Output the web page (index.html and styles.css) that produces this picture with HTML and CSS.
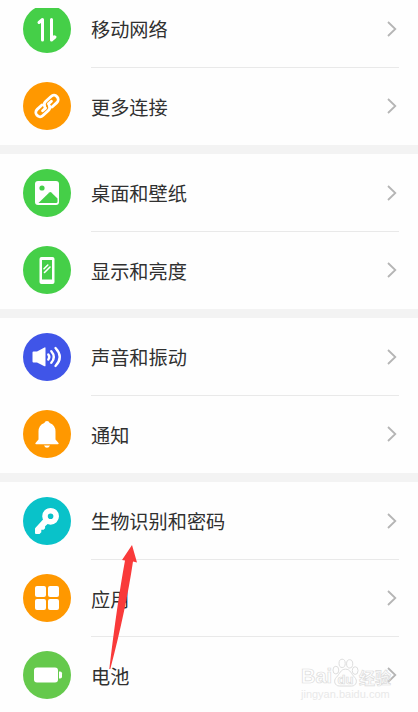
FILE: index.html
```html
<!DOCTYPE html>
<html lang="zh-CN">
<head>
  <meta charset="UTF-8">
  <meta name="viewport" content="width=device-width, initial-scale=1.0">
  <title>设置</title>
  <link rel="stylesheet" href="styles.css">
</head>
<body>

  <main class="settings">

    <!-- Network (scrolled partly under the top edge) -->
    <section class="group group-scrolled">
      <a class="row">
        <span class="icon green">
          <svg viewBox="0 0 48 48" fill="none" stroke="#fff" stroke-width="3" stroke-linecap="round" stroke-linejoin="round"><path d="M19.500 35V14.500l-3.500 3M28.500 14.500v20.500l3.500-3"/><path d="M28.500 34.500v-3.500h3z" fill="#fff" stroke-width="1"/></svg>
        </span>
        <span class="label">移动网络</span>
        <svg class="chevron" viewBox="0 0 10 16"><path d="M1 1l7.300 7L1 15"/></svg>
      </a>
      <a class="row">
        <span class="icon orange">
          <svg viewBox="0 0 48 48"><g transform="rotate(-43 24 24)" fill="none" stroke="#fff" stroke-width="2.900" stroke-linecap="round"><path d="M21 19.800H14.500a4.200 4.200 0 0 0 0 8.400H22a4.200 4.200 0 0 0 4-3M27 28.200h6.500a4.200 4.200 0 0 0 0-8.400H26a4.200 4.200 0 0 0-4 3M17.500 24.500h4M26.500 23.500h4"/></g></svg>
        </span>
        <span class="label">更多连接</span>
        <svg class="chevron" viewBox="0 0 10 16"><path d="M1 1l7.300 7L1 15"/></svg>
      </a>
    </section>

    <!-- Display -->
    <section class="group">
      <a class="row">
        <span class="icon green">
          <svg viewBox="0 0 48 48"><rect x="12" y="12" width="24" height="24" rx="3" fill="#fff"/><g fill="#45cf48"><circle cx="19" cy="19" r="2.600"/><path d="M15.500 34L26.300 23.500Q27.300 22.600 28.300 23.500L34.500 29.500V32.500Q34.500 34 33 34z"/></g></svg>
        </span>
        <span class="label">桌面和壁纸</span>
        <svg class="chevron" viewBox="0 0 10 16"><path d="M1 1l7.300 7L1 15"/></svg>
      </a>
      <a class="row">
        <span class="icon green">
          <svg viewBox="0 0 48 48"><rect x="16.500" y="11" width="15" height="27" rx="2" fill="#fff"/><path d="M19 14h10v19.500H19z" fill="#45cf48"/><path d="M21 22.800l3.800-3.800M21.500 26.500l5.500-5.500" stroke="#fff" stroke-width="1.600" stroke-linecap="round"/></svg>
        </span>
        <span class="label">显示和亮度</span>
        <svg class="chevron" viewBox="0 0 10 16"><path d="M1 1l7.300 7L1 15"/></svg>
      </a>
    </section>

    <!-- Sound and notifications -->
    <section class="group">
      <a class="row">
        <span class="icon blue">
          <svg viewBox="0 0 48 48"><path d="M9.500 19.500q0-1 1-1H14L21.500 14.500q1-.5 1 .7v17.300q0 1.200-1 .7L14 29.500h-3.500q-1 0-1-1z" fill="#fff"/><g fill="none" stroke="#fff" stroke-width="2.400" stroke-linecap="round"><path d="M25.300 21.500q2 2.500 0 5M28.300 18.200q5 5.800 0 11.600M32.500 15q8.500 9 0 18"/></g></svg>
        </span>
        <span class="label">声音和振动</span>
        <svg class="chevron" viewBox="0 0 10 16"><path d="M1 1l7.300 7L1 15"/></svg>
      </a>
      <a class="row">
        <span class="icon orange">
          <svg viewBox="0 0 48 48"><path d="M24 11q2 0 2.700 1.900Q32.500 15 32.500 21.500V29.500L35.500 33q.7 1.300-.8 1.300H13.300q-1.500 0-.8-1.300L15.500 29.500V21.500Q15.500 15 21.300 12.900 22 11 24 11zM21 35.500h6q-1 2.200-3 2.200t-3-2.200z" fill="#fff"/></svg>
        </span>
        <span class="label">通知</span>
        <svg class="chevron" viewBox="0 0 10 16"><path d="M1 1l7.300 7L1 15"/></svg>
      </a>
    </section>

    <!-- Security, apps, battery -->
    <section class="group">
      <a class="row">
        <span class="icon teal">
          <svg viewBox="0 0 48 48"><circle cx="27.600" cy="19.300" r="5.600" fill="none" stroke="#fff" stroke-width="5.600"/><path d="M20.500 22L12.500 30.800q-.5.500-.5 1.300V36q0 1 1 1h3.500l1.800-1.800v-2.400h2.300l1.500-1.500v-2l3.400-3z" fill="#fff"/></svg>
        </span>
        <span class="label">生物识别和密码</span>
        <svg class="chevron" viewBox="0 0 10 16"><path d="M1 1l7.300 7L1 15"/></svg>
      </a>
      <a class="row">
        <span class="icon orange">
          <svg viewBox="0 0 48 48" fill="#fff"><rect x="12" y="12" width="11" height="11" rx="2"/><rect x="25" y="12" width="11" height="11" rx="2"/><rect x="12" y="25" width="11" height="11" rx="2"/><rect x="25" y="25" width="11" height="11" rx="2"/></svg>
        </span>
        <span class="label">应用</span>
        <svg class="chevron" viewBox="0 0 10 16"><path d="M1 1l7.300 7L1 15"/></svg>
      </a>
      <a class="row">
        <span class="icon light-green">
          <svg viewBox="0 0 48 48" fill="#fff"><rect x="11" y="16.500" width="24" height="15" rx="3"/><path d="M36 20.500h1.200q1.800 0 1.800 1.800v3.400q0 1.800-1.800 1.800H36z"/></svg>
        </span>
        <span class="label">电池</span>
        <svg class="chevron" viewBox="0 0 10 16"><path d="M1 1l7.300 7L1 15"/></svg>
      </a>
    </section>

  </main>

  <!-- Arrow pointing at the biometrics row -->
  <svg class="pointer" viewBox="0 0 30 126"><path d="M23 1L28 18.500 24 17.500Q17 65 1.300 125H.3Q8 60 16 16.500L13 16z"/></svg>

  <!-- Watermark -->
  <div class="watermark">
    <div class="brand">
      <span class="brand-latin">Bai</span>
      <span class="paw">
        <svg viewBox="0 0 28 30"><path d="M14 11C9 11 8 16 4.500 19.500 1 23 3 28.500 7.500 28.500h13c4.500 0 6.500-5.500 3-9C20 16 19 11 14 11z"/><ellipse cx="4" cy="12" rx="3" ry="4"/><ellipse cx="10.500" cy="5" rx="3.200" ry="4.300"/><ellipse cx="18.300" cy="5.500" rx="3.200" ry="4.300"/><ellipse cx="24" cy="12.500" rx="3" ry="4"/></svg>
        <span class="paw-text">du</span>
      </span>
      <span class="brand-cn">经验</span>
    </div>
    <div class="site">jingyan.baidu.com</div>
  </div>

</body>
</html>
```
FILE: styles.css
```css
:root {
  --bg-color: #f3f3f3;
  --card-bg: #fefefe;
  --text-color: #303030;
  --line: #e9e9e9;
  --mark: #dcdcdc;
}

* {
  box-sizing: border-box;
}

body {
  position: relative;
  height: 712px;
  margin: 0;
  padding-top: 8px;
  overflow: hidden;
  background-color: var(--card-bg);
  color: var(--text-color);
  font-family: "Noto Sans CJK SC", sans-serif;
}

.settings {
  display: flex;
  flex-direction: column;
  gap: 9px;
  background-color: var(--bg-color);
}

.group {
  display: flex;
  flex-direction: column;
  height: 155px;
  padding: 0 19px 0 23px;
  background-color: var(--card-bg);
}

.group:last-child {
  height: 232px;
}

/* first row is cut by the top edge */
.group-scrolled {
  height: 137px;
  justify-content: flex-end;
  padding-bottom: 1px;
  overflow: hidden;
}

.row {
  display: flex;
  flex: none;
  align-items: center;
  height: 77px;
  padding: 1px 2px 0 0;
  background: linear-gradient(var(--line), var(--line)) 68px 0 / 308px 1px no-repeat;
}

.row:first-child {
  background: none;
}

.icon {
  width: 48px;
  height: 48px;
  border-radius: 50%;
  overflow: hidden;
}

.icon svg {
  display: block;
  width: 48px;
  height: 48px;
}

.green { background-color: #45cf48; }
.orange { background-color: #ff9800; }
.blue { background-color: #4055e8; }
.teal { background-color: #09c2c9; }
.light-green { background-color: #65c94c; }

.label {
  flex: 1;
  margin-left: 20px;
  font-size: 19.2px;
  line-height: 28px;
}

.row + .row .label {
  padding-top: 2px;
}

.chevron {
  width: 10px;
  height: 16px;
  fill: none;
  stroke: #b5b5b5;
  stroke-width: 1.8;
}

.pointer {
  position: absolute;
  left: 109px;
  top: 544px;
  width: 30px;
  height: 126px;
  fill: #f93a3a;
}

.watermark {
  position: absolute;
  left: 301px;
  top: 657px;
  width: 92px;
  font-family: "Liberation Sans", sans-serif;
  color: transparent;
  -webkit-text-stroke: 0.7px var(--mark);
}

.brand {
  display: flex;
  align-items: flex-end;
  height: 31px;
}

.brand-latin {
  flex: none;
  width: 31px;
  color: #fff;
  font-size: 20px;
  font-weight: bold;
  line-height: 24px;
}

.paw {
  display: grid;
  flex: none;
  width: 27px;
}

.paw svg {
  grid-area: 1 / 1;
  width: 27px;
  height: 30px;
  fill: none;
  stroke: var(--mark);
}

.paw-text {
  grid-area: 1 / 1;
  align-self: end;
  color: #fff;
  text-align: center;
  font-size: 13px;
  font-weight: bold;
  line-height: 17px;
}

.brand-cn {
  flex: none;
  font-family: "Noto Sans CJK SC", sans-serif;
  font-size: 16px;
  font-weight: bold;
  line-height: 22px;
}

.site {
  font-size: 11px;
  line-height: 13px;
  color: #e9e9e9;
  -webkit-text-stroke: 0;
}
```
